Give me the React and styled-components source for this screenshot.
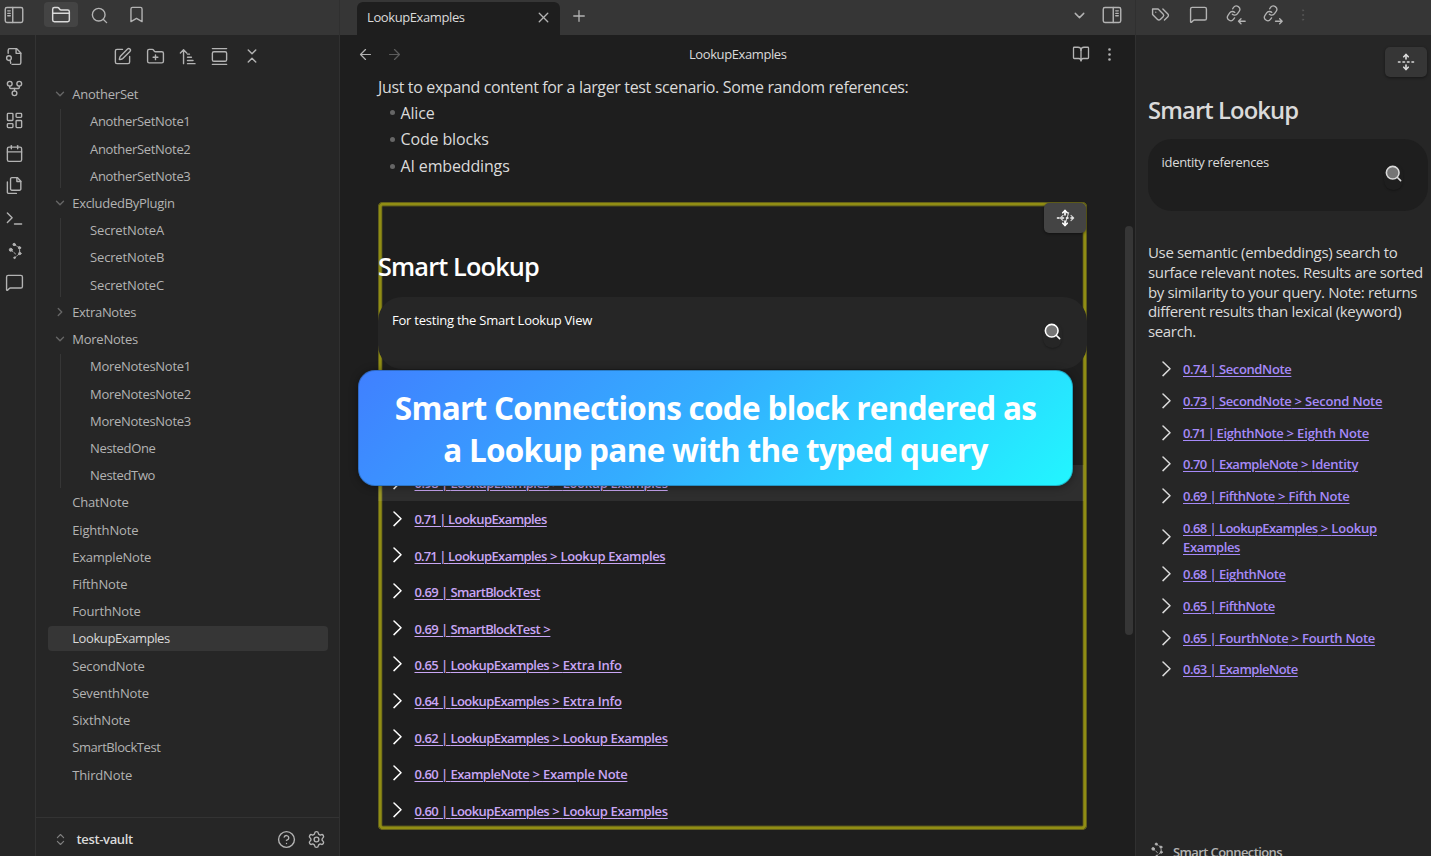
import React from 'react';
import styled, { createGlobalStyle, css } from 'styled-components';
import {
  ArrowLeft, ArrowRight, BookOpen, Bookmark, Calendar, ChevronDown, ChevronRight,
  ChevronsDownUp, ChevronsUpDown, EllipsisVertical, FolderClosed, FolderPlus,
  GalleryVertical, GitFork, HelpCircle, LayoutDashboard, MessageSquare, Plus, Search,
  Settings, SquarePen, UnfoldVertical, X,
} from 'lucide-react';

const Global = createGlobalStyle`
  * { box-sizing: border-box; }
  body { margin: 0; background: #1e1e1e; overflow: hidden; }
  h1, h2, p, ul { margin: 0; padding: 0; }
  ul { list-style: none; }
  svg { display: block; flex: none; }
`;

/* ---------- custom icons ---------- */

const Glyph = ({ size = 19, stroke = 1.75, children, ...rest }) => (
  <svg width={size} height={size} viewBox="0 0 24 24" fill="none" stroke="currentColor"
    strokeWidth={stroke} strokeLinecap="round" strokeLinejoin="round" {...rest}>
    {children}
  </svg>
);

const SidebarIcon = ({ flip }) => (
  <Glyph size={20} stroke={1.7} transform={flip ? 'scale(-1 1)' : undefined}>
    <rect x="1.5" y="3" width="21" height="18" rx="2" />
    <path d="M10.5 3v18M4.5 7h3M4.5 10h3M4.5 13h3" />
  </Glyph>
);

const FileSearchIcon = () => (
  <Glyph>
    <path d="M4 8V4a2 2 0 0 1 2-2h8.5L20 7.5V20a2 2 0 0 1-2 2H9" />
    <path d="M14 2v6h6" />
    <circle cx="5" cy="14" r="3" />
    <path d="m6.5 17 .8 3.5" />
  </Glyph>
);

const FilesIcon = () => (
  <Glyph>
    <path d="M15.5 2H8.6c-.4 0-.8.2-1.1.5-.3.3-.5.7-.5 1.1v12.8c0 .4.2.8.5 1.1.3.3.7.5 1.1.5h9.8c.4 0 .8-.2 1.1-.5.3-.3.5-.7.5-1.1V6.5L15.5 2z" />
    <path d="M3 7.6v12.8c0 .4.2.8.5 1.1.3.3.7.5 1.1.5h9.8" />
    <path d="M15 2v5h5" />
  </Glyph>
);

const PromptIcon = () => (
  <Glyph>
    <path d="m3 17 6-6-6-6M12 19h9" />
  </Glyph>
);

const TagsIcon = () => (
  <Glyph>
    <path d="M9 5H2v7l6.29 6.29c.94.94 2.48.94 3.42 0l3.58-3.58c.94-.94.94-2.48 0-3.42L9 5Z" />
    <path d="M6 9.01V9" />
    <path d="m15 5 6.3 6.3a2.4 2.4 0 0 1 0 3.4L17 19" />
  </Glyph>
);

const GraphIcon = ({ size = 19 }) => (
  <Glyph size={size} stroke={1.2}>
    <path d="M11.6 4.4 18.3 8.6l.4 7.2L12 21.2M7.3 11.1l6 5.2" strokeDasharray="3.2 2" />
    <g fill="currentColor">
      <circle cx="11.6" cy="4.4" r="1.5" />
      <circle cx="18.3" cy="8.6" r="1.5" />
      <circle cx="18.7" cy="15.8" r="1.5" />
      <circle cx="12" cy="21.2" r="1" />
      <circle cx="7.3" cy="11.1" r="1.9" />
    </g>
  </Glyph>
);

const SortIcon = () => (
  <Glyph>
    <path d="M3 7.5 7 3.5l4 4M7 3.5V21M12 9h2.5M12 13h5M12 17h7M12 21h9.5" />
  </Glyph>
);

const LinkArrowIcon = ({ out }) => (
  <Glyph size={20} stroke={1.6}>
    <g transform="rotate(-10 10 10) translate(-.7 0) scale(.82)" strokeWidth="1.9">
      <path d="M10 13a5 5 0 0 0 7.54.54l3-3a5 5 0 0 0-7.07-7.07l-1.72 1.71" />
      <path d="M14 11a5 5 0 0 0-7.54-.54l-3 3a5 5 0 0 0 7.07 7.07l1.71-1.71" />
    </g>
    <path d={out ? 'M15 19.5h8M20 16.5l3 3-3 3' : 'M23 19.5h-8M18 16.5l-3 3 3 3'} />
  </Glyph>
);

const Caret = () => (
  <svg width="10" height="17" viewBox="0 0 10 17" fill="none" stroke="currentColor"
    strokeWidth="1.5" strokeLinecap="round" strokeLinejoin="round">
    <path d="M1 1 8 7.8 1 14.6" />
  </svg>
);

/* ---------- shell ---------- */

const Shell = styled.div`
  display: grid;
  grid-template-columns: 340px 796px 295px;
  width: 1431px;
  height: 856px;
  overflow: hidden;
  background: #1e1e1e;
  color: #dadada;
  font-family: 'Open Sans', 'Noto Sans', sans-serif;
  font-size: 13px;
`;

const Column = styled.section`
  display: flex;
  flex-direction: column;
  min-width: 0;
  height: 856px;
  background: ${(p) => p.$bg || '#262626'};
  ${(p) => p.$line && css`border-${p.$line}: 1px solid #303030;`}
`;

const TopBar = styled.header`
  display: flex;
  flex: none;
  height: 35px;
  background: #363636;
  color: #b3b3b3;
  padding-left: ${(p) => p.$pad || 0}px;
`;

const IconSlot = styled.span`
  display: flex;
  align-items: center;
  justify-content: center;
  flex: none;
  width: ${(p) => p.$w || 32.3}px;
  height: ${(p) => p.$h || 29}px;
  color: ${(p) => p.$color || '#b3b3b3'};
`;

const ActiveTool = styled.span`
  display: flex;
  align-items: center;
  justify-content: center;
  width: 34px;
  height: 25px;
  margin: 2px 2px 0 20px;
  border-radius: 4px;
  background: #444;
  color: #dadada;
`;

/* ---------- left ---------- */

const LeftBody = styled.div`
  display: flex;
  flex: 1;
  min-height: 0;
`;

const Ribbon = styled.nav`
  display: flex;
  flex-direction: column;
  align-items: flex-start;
  width: 36px;
  padding-top: 5px;
  border-right: 1px solid #333;
`;

const Explorer = styled.div`
  display: flex;
  flex-direction: column;
  flex: 1;
  min-width: 0;
`;

const Tools = styled.div`
  display: flex;
  justify-content: center;
  height: 42px;
`;

const Tree = styled.ul`
  flex: 1;
  padding: 4.5px 11px 0 12px;
`;

const TreeRow = styled.li`
  display: flex;
  align-items: center;
  height: 25.22px;
  margin-bottom: 2px;
  padding-left: 5px;
  border-radius: 4px;
  background: ${(p) => (p.$active ? '#363636' : 'transparent')};
  color: ${(p) => (p.$active ? '#dadada' : '#b3b3b3')};
  letter-spacing: ${(p) => p.$ls || -0.15}px;
  white-space: nowrap;
`;

const NestRow = styled(TreeRow)`
  padding-left: 17px;
`;

const Twist = styled.span`
  display: flex;
  justify-content: center;
  width: 14px;
  margin-right: 5.2px;
  color: #666;
`;

const Nest = styled.li`
  margin: 0 0 0 12px;
  padding-left: 12px;
  border-left: 1px solid #363636;
`;

const VaultBar = styled.footer`
  display: flex;
  align-items: center;
  height: 39px;
  padding: 4px 7px 0 17px;
  border-top: 1px solid #333;
  color: #b3b3b3;
`;

const VaultName = styled.span`
  flex: 1;
  margin-left: 8.5px;
  color: #dadada;
  font-weight: 600;
  letter-spacing: -0.35px;
`;

/* ---------- centre ---------- */

const Tab = styled.div`
  display: flex;
  align-items: center;
  justify-content: space-between;
  width: 203px;
  height: 33px;
  margin-top: 2px;
  padding: 0 8px 3px 10px;
  border-radius: 6px 6px 0 0;
  background: #1e1e1e;
  color: #dadada;
  letter-spacing: -0.4px;
`;

const Grow = styled.span`
  flex: 1;
`;

const ViewHeader = styled.div`
  display: grid;
  grid-template-columns: 101px 1fr 100px;
  align-items: center;
  flex: none;
  height: 38px;
  padding: 0 12px 0 11.5px;
  color: #b3b3b3;
`;

const ViewTitle = styled.span`
  color: #dadada;
  text-align: center;
  letter-spacing: -0.4px;
`;

const Group = styled.span`
  display: flex;
  align-items: center;
  justify-content: ${(p) => (p.$end ? 'flex-end' : 'flex-start')};
`;

const Scroller = styled.div`
  position: relative;
  display: flex;
  flex: 1;
  min-height: 0;
`;

const Note = styled.article`
  width: 747px;
  padding: 0 0 0 38px;
  font-size: 16px;
`;

const Para = styled.p`
  height: 27px;
  line-height: 28px;
  letter-spacing: -0.35px;
  white-space: nowrap;
`;

const Bullets = styled.ul`
  margin-top: -0.8px;
  letter-spacing: -0.15px;
`;

const Bullet = styled.li`
  display: flex;
  align-items: center;
  gap: 5.5px;
  height: 26.8px;
  padding-left: 12px;

  &::before {
    content: '';
    width: 5px;
    height: 5px;
    border-radius: 50%;
    background: #666;
  }
`;

const ScrollThumb = styled.div`
  width: 8px;
  height: 409px;
  margin: 153px 0 0 38px;
  border-radius: 4px;
  background: #363636;
`;

const Block = styled.section`
  position: relative;
  width: 709px;
  height: 628px;
  margin-top: 22.5px;
  padding-top: 44px;
  border-radius: 5px;
  box-shadow: inset 0 0 0 0.8px #55531c, inset 0 0 0 3.6px #908d14, inset 0 0 0 4.4px #55531c;
`;

const Title = styled.h2`
  height: 40px;
  line-height: 40px;
  color: ${(p) => p.$color};
  font-size: ${(p) => p.$size}px;
  font-weight: 600;
  letter-spacing: ${(p) => p.$ls}px;
  white-space: nowrap;
`;

const QueryBox = styled.div`
  display: flex;
  justify-content: space-between;
  flex: none;
  height: 72px;
  padding: ${(p) => p.$pad};
  border-radius: 24px;
  background: ${(p) => p.$bg};
  color: ${(p) => p.$color};
  font-size: 13px;
  line-height: 20px;
  letter-spacing: ${(p) => p.$ls}px;
`;

const BlockQuery = styled(QueryBox).attrs({
  $bg: '#262626', $color: '#fff', $pad: '13px 25px 0 14px', $ls: -0.23,
})`
  margin-top: 10.5px;
`;

const SideQuery = styled(QueryBox).attrs({
  $bg: '#1e1e1e', $color: '#dadada', $pad: '13px 25px 0 13.6px', $ls: -0.33,
})`
  margin-top: 9px;
`;

const SubmitDisc = styled.span`
  display: flex;
  justify-content: center;
  width: 19px;
  height: 26px;
  margin-top: 12px;
  border-radius: 10px;
  box-shadow: 0 1px 2px rgba(0, 0, 0, 0.28);

  svg circle { fill: #757575; }
`;

const FoldButton = styled.span`
  display: grid;
  place-items: center;
  width: 42px;
  height: 30px;
  border-radius: 5px;
  background: ${(p) => p.$bg};
  color: ${(p) => p.$color};
  box-shadow: 0 1px 3px rgba(0, 0, 0, 0.45);

  svg { grid-area: 1 / 1; }
`;

const CodeIcon = styled(Glyph)`
  margin-left: 5px;
  opacity: 0.75;
`;

const BlockCorner = styled.div`
  position: absolute;
  top: 1px;
  right: 1.5px;
`;

const Results = styled.ul`
  margin-top: 96.4px;
`;

const Result = styled.li`
  display: flex;
  align-items: center;
  gap: 12px;
  height: 36.42px;
  margin-right: 3px;
  padding: 1px 0 0 14.5px;
  color: #fff;
  background: ${(p) => (p.$hover ? 'rgba(255, 255, 255, 0.075)' : 'transparent')};

  svg { margin-bottom: 2px; }
`;

const Link = styled.a`
  color: ${(p) => p.$color};
  font-size: 13px;
  font-weight: 600;
  line-height: 19.3px;
  letter-spacing: -0.17px;
  text-decoration: underline;
  text-decoration-thickness: 1px;
  text-underline-offset: 2px;
`;

const Part = styled.span`
  letter-spacing: ${(p) => p.$ls}px;
`;

const Banner = styled.div`
  position: absolute;
  top: 297px;
  left: 18px;
  display: flex;
  align-items: center;
  justify-content: center;
  width: 715px;
  height: 116px;
  padding-top: 2px;
  border: 1px solid rgba(20, 60, 90, 0.35);
  border-radius: 17px;
  background: linear-gradient(135deg, #4080ff 0%, #34adff 45%, #22f6ff 100%) border-box;
  box-shadow: 0 1px 8px rgba(0, 0, 0, 0.4);
  color: #fff;
  font-size: 31.5px;
  font-weight: 700;
  line-height: 42px;
  letter-spacing: -0.71px;
  text-align: center;
  white-space: pre-line;
`;

/* ---------- right ---------- */

const Side = styled.div`
  display: flex;
  flex-direction: column;
  flex: 1;
  padding: 12px 3px 0 12px;
`;

const SideTop = styled.div`
  display: flex;
  justify-content: flex-end;
  height: 43px;
  padding-right: 1.5px;
`;

const Help = styled.p`
  margin-top: 32px;
  font-size: 15px;
  line-height: 19.8px;
  letter-spacing: -0.35px;
  white-space: pre;
`;

const SideResults = styled.ul`
  flex: 1;
  margin-top: 12px;
  padding-left: 14px;
`;

const SideResult = styled.li`
  min-height: 31.7px;
  padding: 6.2px 0 1.9px;
`;

const SideResultInner = styled.div`
  display: flex;
  align-items: center;
  gap: 11px;
  color: #dadada;
`;

const Credit = styled.footer`
  display: flex;
  align-items: flex-start;
  gap: 8px;
  height: 15px;
  color: #b3b3b3;
  font-weight: 600;
  line-height: 22px;
  letter-spacing: -0.6px;
`;

/* ---------- data ---------- */

const folders = [
  { name: 'AnotherSet', open: true, notes: ['AnotherSetNote1', 'AnotherSetNote2', 'AnotherSetNote3'] },
  { name: 'ExcludedByPlugin', open: true, notes: ['SecretNoteA', 'SecretNoteB', 'SecretNoteC'] },
  { name: 'ExtraNotes', open: false, notes: [] },
  { name: 'MoreNotes', open: true, notes: ['MoreNotesNote1', 'MoreNotesNote2', 'MoreNotesNote3', 'NestedOne', 'NestedTwo'] },
];

const files = ['ChatNote', 'EighthNote', 'ExampleNote', 'FifthNote', 'FourthNote', 'LookupExamples',
  'SecondNote', 'SeventhNote', 'SixthNote', 'SmartBlockTest', 'ThirdNote'];

const blockResults = [
  ['0.98', 'LookupExamples', 'Lookup Examples'],
  ['0.71', 'LookupExamples'],
  ['0.71', 'LookupExamples', 'Lookup Examples'],
  ['0.69', 'SmartBlockTest'],
  ['0.69', 'SmartBlockTest', ''],
  ['0.65', 'LookupExamples', 'Extra Info'],
  ['0.64', 'LookupExamples', 'Extra Info'],
  ['0.62', 'LookupExamples', 'Lookup Examples'],
  ['0.60', 'ExampleNote', 'Example Note'],
  ['0.60', 'LookupExamples', 'Lookup Examples'],
];

const sideResults = [
  ['0.74', 'SecondNote'],
  ['0.73', 'SecondNote', 'Second Note'],
  ['0.71', 'EighthNote', 'Eighth Note'],
  ['0.70', 'ExampleNote', 'Identity'],
  ['0.69', 'FifthNote', 'Fifth Note'],
  ['0.68', 'LookupExamples', 'Lookup', 'Examples'],
  ['0.68', 'EighthNote'],
  ['0.65', 'FifthNote'],
  ['0.65', 'FourthNote', 'Fourth Note'],
  ['0.63', 'ExampleNote'],
];

/* Letter spacing by name, for the regular (tree) and semibold (result) weights. */
const treeTracking = {
  AnotherSetNote1: -0.32, AnotherSetNote2: -0.32, AnotherSetNote3: -0.32,
  MoreNotesNote1: -0.28, MoreNotesNote2: -0.28, MoreNotesNote3: -0.28,
  ExcludedByPlugin: -0.28, NestedOne: -0.33, NestedTwo: -0.35, AnotherSet: -0.22,
  ExampleNote: -0.22, ExtraNotes: -0.3, MoreNotes: -0.22,
  LookupExamples: -0.4, SmartBlockTest: -0.43,
};

const linkTracking = {
  LookupExamples: -0.57, SmartBlockTest: -0.62, ExampleNote: -0.5, 'Lookup Examples': -0.34,
  SecondNote: -0.37, 'Second Note': -0.2, EighthNote: -0.37, FifthNote: -0.4,
  FourthNote: -0.35, 'Fourth Note': -0.3, 'Extra Info': -0.2, Identity: -0.25,
  'Example Note': -0.27, Examples: -0.35,
};

const ResultLink = ({ color, result: [score, note, heading, wrapped] }) => (
  <Link $color={color}>
    <Part $ls={score === '0.71' ? -0.88 : -0.55}>{`${score} | `}</Part>
    <Part $ls={linkTracking[note]}>{note}</Part>
    {heading !== undefined && ' > '}
    {heading && <Part $ls={linkTracking[heading] || -0.17}>{heading}</Part>}
    {wrapped && <br />}
    {wrapped && <Part $ls={linkTracking[wrapped]}>{wrapped}</Part>}
  </Link>
);

const ribbonIcons = [
  <FileSearchIcon />, <GitFork size={19} strokeWidth={1.75} />, <LayoutDashboard size={19} strokeWidth={1.75} />,
  <Calendar size={19} strokeWidth={1.75} />, <FilesIcon />, <PromptIcon />, <GraphIcon />,
  <MessageSquare size={19} strokeWidth={1.75} />,
];

const toolIcons = [
  <SquarePen size={19} strokeWidth={1.75} />, <FolderPlus size={19} strokeWidth={1.75} />, <SortIcon />,
  <GalleryVertical size={19} strokeWidth={1.75} />, <ChevronsDownUp size={18} strokeWidth={1.9} />,
];

const LeftPane = () => (
  <Column $line="right">
    <TopBar $pad={4}>
      <IconSlot $w={20} $h={30}><SidebarIcon /></IconSlot>
      <ActiveTool><FolderClosed size={20} strokeWidth={1.75} /></ActiveTool>
      <IconSlot $w={38} $h={30}><Search size={19} strokeWidth={1.75} /></IconSlot>
      <IconSlot $w={36}><Bookmark size={19} strokeWidth={1.75} /></IconSlot>
    </TopBar>
    <LeftBody>
      <Ribbon>
        {ribbonIcons.map((icon, i) => <IconSlot key={i} $w={28} $h={32.4}>{icon}</IconSlot>)}
      </Ribbon>
      <Explorer>
        <Tools>
          {toolIcons.map((icon, i) => <IconSlot key={i} $w={32.3} $h={42}>{icon}</IconSlot>)}
        </Tools>
        <Tree>
          {folders.map((f) => (
            <React.Fragment key={f.name}>
              <TreeRow $ls={treeTracking[f.name]}>
                <Twist>
                  {f.open ? <ChevronDown size={14} strokeWidth={2.4} /> : <ChevronRight size={14} strokeWidth={2.4} />}
                </Twist>
                {f.name}
              </TreeRow>
              {f.open && (
                <Nest>
                  <ul>{f.notes.map((n) => <NestRow key={n} $ls={treeTracking[n]}>{n}</NestRow>)}</ul>
                </Nest>
              )}
            </React.Fragment>
          ))}
          {files.map((n) => (
            <TreeRow key={n} $ls={treeTracking[n]} $active={n === 'LookupExamples'}><Twist />{n}</TreeRow>
          ))}
        </Tree>
        <VaultBar>
          <ChevronsUpDown size={15} strokeWidth={1.8} color="#808080" />
          <VaultName>test-vault</VaultName>
          <IconSlot $w={30}><HelpCircle size={19} strokeWidth={1.75} /></IconSlot>
          <IconSlot $w={31}><Settings size={19} strokeWidth={1.75} /></IconSlot>
        </VaultBar>
      </Explorer>
    </LeftBody>
  </Column>
);

const CentrePane = () => (
  <Column $bg="#1e1e1e" $line="right">
    <TopBar $pad={17}>
      <Tab>LookupExamples<X size={17} strokeWidth={1.9} color="#b3b3b3" /></Tab>
      <IconSlot $w={38} $h={31}><Plus size={18} strokeWidth={1.75} /></IconSlot>
      <Grow />
      <IconSlot $w={32} $h={31}><ChevronDown size={17} strokeWidth={2} /></IconSlot>
      <IconSlot $w={33} $h={30}><SidebarIcon flip /></IconSlot>
      <IconSlot $w={7} />
    </TopBar>
    <ViewHeader>
      <Group>
        <IconSlot $w={28}><ArrowLeft size={17} strokeWidth={1.75} /></IconSlot>
        <IconSlot $w={29} $color="#5c5c5c"><ArrowRight size={17} strokeWidth={1.75} /></IconSlot>
      </Group>
      <ViewTitle>LookupExamples</ViewTitle>
      <Group $end>
        <IconSlot $w={28}><BookOpen size={18} strokeWidth={1.75} /></IconSlot>
        <IconSlot $w={28}><EllipsisVertical size={17} strokeWidth={1.75} /></IconSlot>
      </Group>
    </ViewHeader>
    <Scroller>
      <Note>
        <Para>Just to expand content for a larger test scenario. Some random references:</Para>
        <Bullets>
          <Bullet>Alice</Bullet>
          <Bullet>Code blocks</Bullet>
          <Bullet>AI embeddings</Bullet>
        </Bullets>
        <Block>
          <Title $size={25.3} $ls={-0.85} $color="#fff">Smart Lookup</Title>
          <BlockQuery>
            For testing the Smart Lookup View
            <SubmitDisc><Search size={19} strokeWidth={2} /></SubmitDisc>
          </BlockQuery>
          <Results>
            {blockResults.map((r, i) => (
              <Result key={i} $hover={i === 0}><Caret /><ResultLink color="#c9a6f5" result={r} /></Result>
            ))}
          </Results>
          <BlockCorner>
            <FoldButton $bg="#444" $color="#fff">
              <UnfoldVertical size={18} strokeWidth={2.2} />
              <CodeIcon size={16} stroke={1.75}>
                <path d="m18 16 4-4-4-4M6 8l-4 4 4 4M14.5 4l-5 16" />
              </CodeIcon>
            </FoldButton>
          </BlockCorner>
        </Block>
      </Note>
      <ScrollThumb />
      <Banner>{'Smart Connections code block rendered as\na Lookup pane with the typed query'}</Banner>
    </Scroller>
  </Column>
);

const RightPane = () => (
  <Column>
    <TopBar $pad={6}>
      <IconSlot $w={37}><TagsIcon /></IconSlot>
      <IconSlot $w={38}><MessageSquare size={19} strokeWidth={1.75} /></IconSlot>
      <IconSlot $w={37}><LinkArrowIcon /></IconSlot>
      <IconSlot $w={37.5}><LinkArrowIcon out /></IconSlot>
      <IconSlot $w={23} $h={30} $color="#5c5c5c"><EllipsisVertical size={16} strokeWidth={1} /></IconSlot>
    </TopBar>
    <Side>
      <SideTop>
        <FoldButton $bg="#363636" $color="#dadada"><UnfoldVertical size={18} strokeWidth={2.2} /></FoldButton>
      </SideTop>
      <Title as="h1" $size={23.8} $ls={-0.9} $color="#dadada">Smart Lookup</Title>
      <SideQuery>
        identity references
        <SubmitDisc><Search size={19} strokeWidth={2} /></SubmitDisc>
      </SideQuery>
      <Help>
        {'Use semantic (embeddings) search to\nsurface relevant notes. Results are sorted\nby similarity to your query. Note: returns\ndifferent results than lexical (keyword)\nsearch.'}
      </Help>
      <SideResults>
        {sideResults.map((r, i) => (
          <SideResult key={i}>
            <SideResultInner><Caret /><ResultLink color="#a68af9" result={r} /></SideResultInner>
          </SideResult>
        ))}
      </SideResults>
      <Credit><GraphIcon size={17} />Smart Connections</Credit>
    </Side>
  </Column>
);

export default function App() {
  return (
    <>
      <Global />
      <Shell>
        <LeftPane />
        <CentrePane />
        <RightPane />
      </Shell>
    </>
  );
}
